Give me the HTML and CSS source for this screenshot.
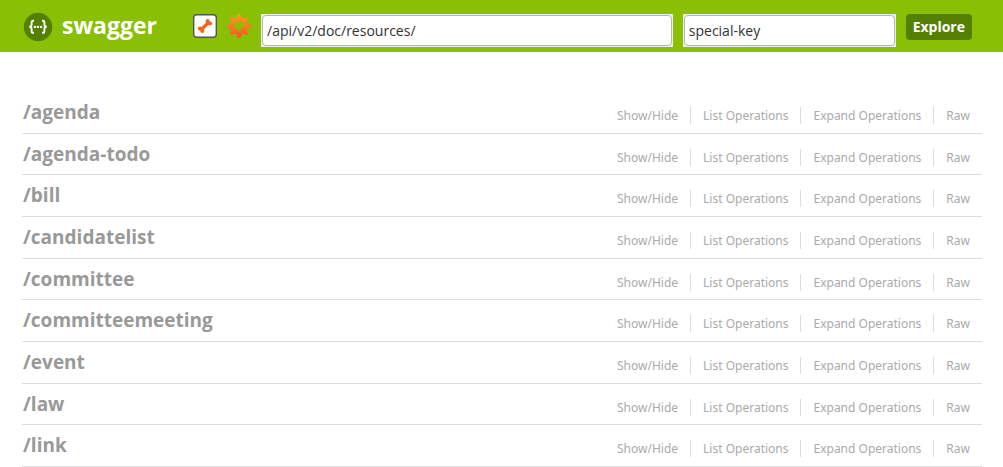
FILE: index.html
```html
<!DOCTYPE html>
<html lang="en">
<head>
<meta charset="utf-8">
<title>Swagger UI</title>
<link rel="stylesheet" href="styles.css">
<script src="resources.js" defer></script>
</head>
<body>
<header class="header">
  <a class="logo" href="#">
    <svg class="logo-mark" viewBox="0 0 30 30" aria-hidden="true">
      <circle cx="15" cy="15" r="14.2" fill="#547f00"/>
      <g fill="none" stroke="#fff" stroke-width="1.9">
        <path d="M11 8.8H10.2Q8.6 8.8 8.6 10.4V12.6Q8.6 14.8 6.2 14.8Q8.6 14.8 8.6 17V19.2Q8.6 20.8 10.2 20.8H11"/>
        <path d="M19 8.8H19.8Q21.4 8.8 21.4 10.4V12.6Q21.4 14.8 23.8 14.8Q21.4 14.8 21.4 17V19.2Q21.4 20.8 19.8 20.8H19"/>
      </g>
      <g fill="#fff"><circle cx="11.9" cy="14.9" r="1.2"/><circle cx="15" cy="14.9" r="1.2"/><circle cx="18.1" cy="14.9" r="1.2"/></g>
    </svg>
    <span>swagger</span>
  </a>
  <form class="selector">
    <button class="icon-button" type="button" aria-label="Pet store example">
      <svg viewBox="0 0 24 24" aria-hidden="true">
        <rect x=".7" y=".7" width="22.6" height="22.6" rx="3" fill="#fff" stroke="#555" stroke-width="1.4"/>
        <path d="M8 16L16 8" stroke="#f7621b" stroke-width="3.2"/>
        <g fill="#f7621b"><circle cx="7" cy="14.6" r="2.1"/><circle cx="9.3" cy="17" r="2.1"/><circle cx="14.7" cy="7.2" r="2.1"/><circle cx="17" cy="9.5" r="2.1"/></g>
      </svg>
    </button>
    <button class="icon-button" type="button" aria-label="Wordnik API">
      <svg viewBox="0 0 24 24" aria-hidden="true">
        <defs><linearGradient id="gear" x1="0" y1="0" x2="0" y2="1"><stop offset="0" stop-color="#f9a01b"/><stop offset="1" stop-color="#f15a24"/></linearGradient></defs>
        <path fill="url(#gear)" fill-rule="evenodd" d="M10.3 .8Q12 -.8 13.7 .8L14.6 3.2L17 4.2L19 3.2Q21.5 2.5 20.8 5L19.8 7L20.8 9.4L23.2 10.3Q24.8 12 23.2 13.7L20.8 14.6L19.8 17L20.8 19Q21.5 21.5 19 20.8L17 19.8L14.6 20.8L13.7 23.2Q12 24.8 10.3 23.2L9.4 20.8L7 19.8L5 20.8Q2.5 21.5 3.2 19L4.2 17L3.2 14.6L.8 13.7Q-.8 12 .8 10.3L3.2 9.4L4.2 7L3.2 5Q2.5 2.5 5 3.2L7 4.2L9.4 3.2ZM12 17L7.8 12.8Q6.4 11 7.4 9.3Q9.8 6.5 12 9.2Q14.2 6.5 16.6 9.3Q17.6 11 16.2 12.8Z"/>
      </svg>
    </button>
    <label class="field field-url"><input type="text" value="/api/v2/doc/resources/" aria-label="API URL"></label>
    <label class="field field-key"><input type="text" value="special-key" aria-label="API key"></label>
    <button class="explore" type="button">Explore</button>
  </form>
</header>
<main>
  <ul class="resources" id="resources"></ul>
</main>
</body>
</html>
```

FILE: resources.js
```js
const names = ["agenda", "agenda-todo", "bill", "candidatelist", "committee", "committeemeeting", "event", "law", "link"];
const actions = ["Show/Hide", "List Operations", "Expand Operations", "Raw"];

document.getElementById("resources").innerHTML = names.map(name => `
  <li class="resource">
    <h2 class="resource-name"><a href="#${name}">/${name}</a></h2>
    <ul class="actions">${actions.map(label => `<li><a href="#${name}">${label}</a></li>`).join("")}</ul>
  </li>`).join("");
```

FILE: styles.css
```css
* { box-sizing: border-box; }

body {
  margin: 0;
  background: #fff;
  font-family: "Open Sans", "Noto Sans", sans-serif;
}

a { color: inherit; text-decoration: none; }
ul { list-style: none; margin: 0; padding: 0; }

.header {
  display: flex;
  align-items: flex-start;
  justify-content: space-between;
  gap: 36px;
  height: 52px;
  padding: 12px 31px 0 23px;
  background: #89bf04;
}

.logo {
  display: flex;
  align-items: center;
  gap: 9px;
  height: 30px;
  color: #fff;
  font-size: 23px;
  font-weight: 700;
  line-height: 28px;
}
.logo > span { padding-bottom: 4px; }
.logo-mark { width: 30px; height: 30px; }

.selector {
  display: flex;
  flex: 1;
  align-items: flex-start;
  gap: 10px;
}

.icon-button {
  flex: none;
  width: 24px;
  height: 24px;
  margin-top: 2px;
  padding: 0;
  border: 0;
  background: none;
}
.icon-button svg { display: block; width: 24px; height: 24px; }

.field {
  display: flex;
  min-width: 0;
  height: 33px;
  margin-top: 2px;
  padding: 1px;
  background: #eee;
}
.field input {
  width: 100%;
  min-width: 0;
  padding: 0 4px;
  border: 1px solid #b5b5b5;
  border-radius: 4px;
  outline: 0;
  background: #fff;
  color: #333;
  font: 14px "Open Sans", "Noto Sans", sans-serif;
}
.field-url { flex: 412; }
.field-key { flex: 212; }

.explore {
  flex: none;
  height: 26px;
  margin-top: 2px;
  padding: 0 7px 2px;
  border: 0;
  border-radius: 4px;
  background: #547f00;
  color: #fff;
  font: 700 14px "Open Sans", "Noto Sans", sans-serif;
}

.resources {
  display: flex;
  flex-direction: column;
  height: calc(100vh - 52px);
  padding: 40px 21px 0 22px;
}

.resource {
  display: flex;
  flex: 0 1 42px;
  min-height: 41px;
  justify-content: space-between;
  border-bottom: 1px solid #ddd;
}

.resource-name {
  margin: 0;
  padding-left: 1px;
  color: #999;
  font-size: 19px;
  font-weight: 700;
  line-height: 40px;
}

.actions {
  display: flex;
  margin-top: 15px;
  color: #aaa;
  font-family: "Noto Sans", "Open Sans", sans-serif;
  font-size: 12px;
  line-height: 17px;
}
.actions li { height: 17px; padding: 0 12px; border-right: 1px solid #ddd; }
.actions li:last-child { border-right: 0; }
```
